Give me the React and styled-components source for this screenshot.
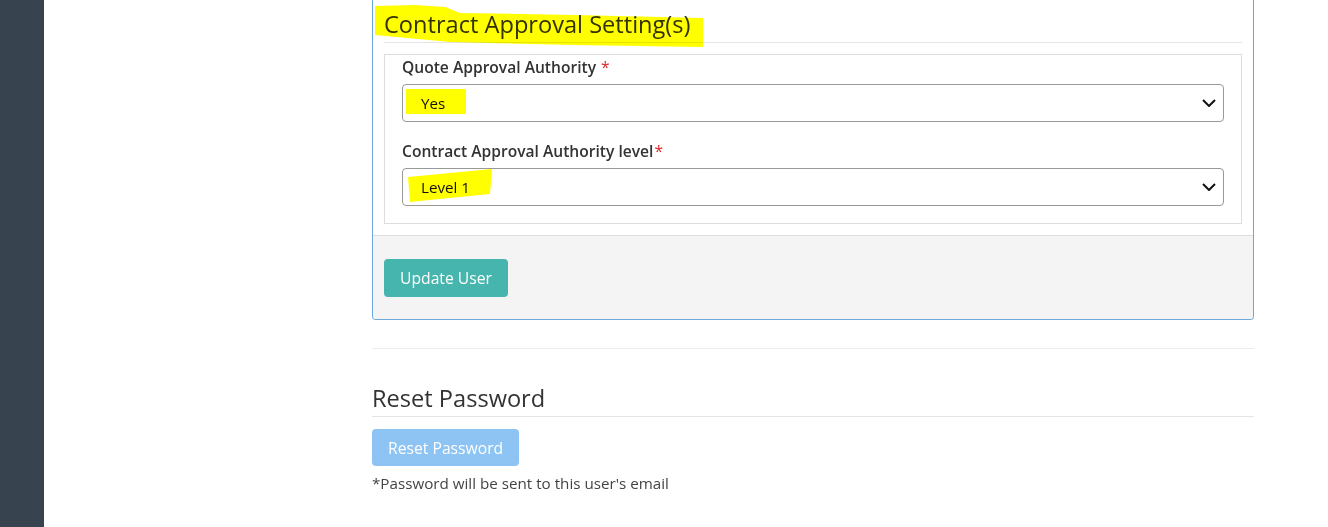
import React from "react"
import styled, { createGlobalStyle } from "styled-components"

const GlobalStyle = createGlobalStyle`
  * { box-sizing: border-box; }
  body {
    margin: 0;
    background: #fff;
    font-family: "Open Sans", "Noto Sans", sans-serif;
    color: #333;
  }
`

const Layout = styled.div`
  display: flex;
  min-height: 100vh;
`

const Sidebar = styled.aside`
  width: 44px;
  flex-shrink: 0;
  background: #37434f;
`

const Main = styled.main`
  flex: 1;
  padding-left: 328px;
`

const Column = styled.div`
  width: 882px;
`

const Card = styled.div`
  border: 1px solid #6ba8dc;
  border-top: none;
  border-radius: 0 0 4px 4px;
  overflow: hidden;
`

const CardBody = styled.div`
  padding: 10px 11px 11px;
`

const CardFooter = styled.div`
  background: #f4f4f4;
  border-top: 1px solid #dedede;
  padding: 23px 11px 22px;
`

const Heading = styled.h3`
  position: relative;
  margin: 0;
  font-size: 23.6px;
  line-height: 29px;
  font-weight: 400;
  color: #333;
  padding-bottom: 3px;
  border-bottom: 1px solid #e5e5e5;
  margin-top: ${(p) => p.$top || 0}px;
`

const Marker = styled.span`
  position: absolute;
  left: ${(p) => p.$left}px;
  top: ${(p) => p.$top}px;
  width: ${(p) => p.$w}px;
  height: ${(p) => p.$h}px;
  background: #ffff00;
  mix-blend-mode: multiply;
  pointer-events: none;
  clip-path: ${(p) => p.$clip || "none"};
`

const Fieldset = styled.div`
  margin-top: 11px;
  border: 1px solid #dddddd;
  padding: 2px 17px 17px;
`

const Group = styled.div`
  & + & {
    margin-top: 19px;
  }
`

const Label = styled.label`
  display: block;
  font-size: 15.6px;
  line-height: 21px;
  font-weight: 600;
  color: #333;
  margin-bottom: 6px;
`

const Required = styled.span`
  color: #e02424;
  margin-left: ${(p) => (p.$gap ? 5 : 1)}px;
  font-weight: 400;
`

const SelectWrap = styled.div`
  position: relative;
`

const Select = styled.select`
  appearance: none;
  -webkit-appearance: none;
  display: block;
  width: 100%;
  height: 38px;
  padding: 0 36px 0 18px;
  border: 1px solid #999;
  border-radius: 4px;
  background: #fff;
  font-family: "Open Sans", "Noto Sans", sans-serif;
  font-size: 15.2px;
  color: #111;
  outline: none;
`

const Chevron = styled.svg`
  position: absolute;
  right: 8px;
  top: 50%;
  transform: translateY(-50%);
  pointer-events: none;
`

const Button = styled.button`
  display: inline-flex;
  align-items: center;
  height: ${(p) => p.$h || 38}px;
  padding: 0 16px;
  border: none;
  border-radius: 4px;
  background: ${(p) => p.$bg};
  color: #fff;
  font-family: "Open Sans", "Noto Sans", sans-serif;
  font-size: 15.7px;
  cursor: pointer;
`

const Rule = styled.hr`
  margin: 28px 0 0;
  border: none;
  border-top: 1px solid #ececec;
`

const ResetButtonRow = styled.div`
  margin-top: 12px;
`

const Note = styled.p`
  margin: 7px 0 0;
  font-size: 15.2px;
  line-height: 20px;
  color: #444;
`

const ArrowIcon = () => (
  <Chevron width="14" height="8" viewBox="0 0 14 8">
    <path d="M1 1l6 6 6-6" fill="none" stroke="#111" strokeWidth="2" />
  </Chevron>
)

const SelectField = ({ label, gap, value, options, marker }) => (
  <Group>
    <Label>
      {label}
      <Required $gap={gap}>*</Required>
    </Label>
    <SelectWrap>
      <Select defaultValue={value}>
        {options.map((o) => (
          <option key={o}>{o}</option>
        ))}
      </Select>
      <ArrowIcon />
      <Marker {...marker} />
    </SelectWrap>
  </Group>
)

export default function App() {
  return (
    <Layout>
      <GlobalStyle />
      <Sidebar />
      <Main>
        <Column>
          <Card>
            <CardBody>
              <Heading>
                Contract Approval Setting(s)
                <Marker
                  $left={-9}
                  $top={-6}
                  $w={328}
                  $h={43}
                  $clip="polygon(0px 2px, 40px 1px, 70px 3px, 85px 9px, 200px 11px, 328px 14px, 328px 43px, 200px 41px, 75px 38px, 0px 31px)"
                />
              </Heading>
              <Fieldset>
                <SelectField
                  label="Quote Approval Authority"
                  gap
                  value="Yes"
                  options={["Yes", "No"]}
                  marker={{ $left: 4, $top: 5, $w: 60, $h: 25 }}
                />
                <SelectField
                  label="Contract Approval Authority level"
                  value="Level 1"
                  options={["Level 1", "Level 2", "Level 3"]}
                  marker={{
                    $left: 6,
                    $top: 1,
                    $w: 84,
                    $h: 33,
                    $clip: "polygon(0px 8px, 84px 0px, 82px 25px, 2px 33px)",
                  }}
                />
              </Fieldset>
            </CardBody>
            <CardFooter>
              <Button $bg="#46b5ad">Update User</Button>
            </CardFooter>
          </Card>

          <Rule />

          <Heading $top={35}>Reset Password</Heading>
          <ResetButtonRow>
            <Button $bg="#8ec4f4" $h={37}>
              Reset Password
            </Button>
          </ResetButtonRow>
          <Note>*Password will be sent to this user's email</Note>
        </Column>
      </Main>
    </Layout>
  )
}
